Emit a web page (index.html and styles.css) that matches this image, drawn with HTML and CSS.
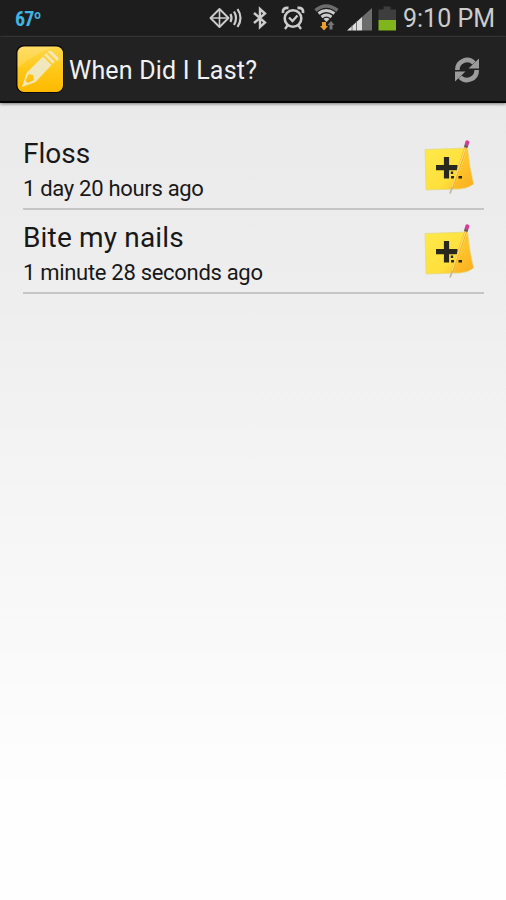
FILE: index.html
```html
<!DOCTYPE html>
<html lang="en">
<head>
<meta charset="utf-8">
<title>When Did I Last?</title>
<link rel="stylesheet" href="styles.css">
</head>
<body>
<svg class="defs" width="0" height="0" aria-hidden="true">
  <defs>
    <linearGradient id="gold" x1="0" y1="0" x2="0" y2="1"><stop offset="0" stop-color="#ffd84a"/><stop offset=".5" stop-color="#ffc818"/><stop offset="1" stop-color="#fdb900"/></linearGradient>
    <linearGradient id="note" x1="0" y1="0" x2="1" y2="1"><stop offset="0" stop-color="#fde94a"/><stop offset=".6" stop-color="#ffe03c"/><stop offset="1" stop-color="#fbb31c"/></linearGradient>
    <linearGradient id="signal" x1="0" y1="0" x2="1" y2="0"><stop offset="0" stop-color="#ddd"/><stop offset=".58" stop-color="#ddd"/><stop offset=".6" stop-color="#6c6c6c"/><stop offset="1" stop-color="#6c6c6c"/></linearGradient>
    <symbol id="add-note" viewBox="0 0 60 60">
      <path d="M5 9.500L47.500 8Q49.500 27 53.500 44Q48 48.500 40 49L6 50Z" fill="url(#note)" stroke="#e3d98a" stroke-width=".8"/>
      <path d="M47.500 9Q49 28 53.500 44Q47 48.500 34 48.500Z" fill="#fba81e" opacity=".5"/>
      <path d="M26.500 17V38.500M16 27.700H37.500" stroke="#28281e" stroke-width="5.200"/>
      <path d="M31 37.300h3M38.500 37.300h3.500M32 31.500v2.500" stroke="#28281e" stroke-width="2.400"/>
      <path d="M46 7L32 48" stroke="#f5ac2d" stroke-width="2.600"/>
      <path d="M45.500 8L31.800 47" stroke="#ffe173" stroke-width="1.200"/>
      <path d="M32.300 47.500L30 53.500" stroke="#c5b9a1" stroke-width="1.800"/>
      <path d="M45.700 7.500L46.600 4.500" stroke="#6a5d66" stroke-width="3.800"/>
      <path d="M46.900 3.500L47.300 2.300" stroke="#d93a9a" stroke-width="4" stroke-linecap="round"/>
    </symbol>
  </defs>
</svg>
<header class="status">
  <span class="temp">67º</span>
  <svg class="status-icons" width="192" height="37" viewBox="208 0 192 37" fill="none" stroke="#ccc" stroke-width="1.900">
    <path d="M210.500 18L219.500 9L228.500 18L219.500 27Z" stroke-linejoin="round"/>
    <path d="M219.500 10V26M211 18H228" stroke-width="1.600"/>
    <path d="M230.500 14Q232.500 18 230.500 22M234 11.500Q238 18 234 25M237.500 9Q243.500 18 237.500 27" stroke-width="2.200"/>
    <path d="M254 13L265 22.500L260 27V9L265 13.500L254 23" stroke-width="2.400"/>
    <circle cx="293" cy="18.500" r="8.300" stroke-width="2.600"/>
    <path d="M289 17.500L292.500 21L297.500 15.500M287.500 25.500L285 29M298.500 25.500L301 29" stroke-width="2.300"/>
    <path d="M283 13Q282 7.500 288.500 8M303 13Q304 7.500 297.500 8" stroke-width="2.800"/>
    <path d="M315.500 10.500Q326 1.500 337.500 10.500" stroke="#6d6d6d" stroke-width="3.600"/>
    <path d="M318.500 13.500Q326 7.500 334.500 13.500M321.500 17Q326.500 13 331.500 17" stroke-width="2.900"/>
    <path d="M323.500 19Q326.500 16.500 329.500 19L326.500 22Z" fill="#ccc" stroke="none"/>
    <path d="M322 22h4v4h2l-4 4.500l-4-4.500h2Z" fill="#eda12b" stroke="none"/>
    <path d="M331 21l3.500 4h-2v4.500h-3v-4.500h-2Z" fill="#777" stroke="none"/>
    <path d="M347 30.500L372 8V30.500Z" fill="url(#signal)" stroke="none"/>
    <path d="M352 25V31M356.500 21V31" stroke="#555" stroke-width=".8"/>
    <path d="M378.500 9.500h5v-3h7v3h5.500v10.500h-17.500Z" fill="#3e3e3e" stroke="none"/>
    <path d="M378.500 20H396V30.500H378.500Z" fill="#80b51c" stroke="none"/>
  </svg>
  <span class="clock">9:10 PM</span>
</header>
<div class="bar">
  <svg class="logo" width="48" height="48" viewBox="0 0 48 48">
    <rect x="0" y="0" width="48" height="48" rx="8" fill="#0c0c12"/>
    <rect x="1.500" y="1.500" width="45.500" height="45.500" rx="6.500" fill="url(#gold)"/>
    <path d="M1.500 23V8Q1.500 1.500 8 1.500H40Q22 6 1.500 23Z" fill="#fff" opacity=".16"/>
    <g fill="#f1e7bd">
      <path fill-rule="evenodd" d="M6 42L10.500 28L27 11.500L35.500 20L19.500 37ZM9.500 36L12 38L18 35L17 30L12.500 29Z"/>
      <path d="M28.300 10.200L30.200 8.300L38.700 16.800L36.800 18.700ZM31.800 6.800Q34 4.500 36.500 7L42 12.500Q43.500 14.500 41 16Z"/>
    </g>
  </svg>
  <h1 class="title">When Did I Last?</h1>
  <svg class="refresh" width="30" height="30" viewBox="0 0 30 30" fill="none" stroke="#9c9c9c" stroke-width="4.600">
    <path d="M5.300 15A9.700 9.700 0 0 1 22 8"/>
    <path d="M24.700 15A9.700 9.700 0 0 1 8 22"/>
    <path d="M27 3.500V13.500H16.500ZM3 26.500V16.500H13.500Z" fill="#9c9c9c" stroke="none"/>
  </svg>
</div>
<main class="list">
  <section class="row">
    <div class="copy"><h2 class="name">Floss</h2><p class="when">1 day 20 hours ago</p></div>
    <svg class="note" width="60" height="60"><use href="#add-note"/></svg>
  </section>
  <section class="row">
    <div class="copy"><h2 class="name nails">Bite my nails</h2><p class="when">1 minute 28 seconds ago</p></div>
    <svg class="note" width="60" height="60"><use href="#add-note"/></svg>
  </section>
</main>
</body>
</html>
```
FILE: styles.css
```css
* { box-sizing: border-box; }
body {
  margin: 0;
  height: 900px;
  display: flex;
  flex-direction: column;
  overflow: hidden;
  font-family: Roboto, sans-serif;
  color: #181818;
  background: linear-gradient(#eaeaea 100px, #eeeeee 300px, #f5f5f5 500px, #fefefe 800px);
}
h1, h2, p { margin: 0; font-weight: 400; white-space: nowrap; }
svg { display: block; flex: none; }
.defs { position: absolute; }
.status {
  display: flex;
  align-items: center;
  height: 37px;
  flex: none;
  padding-left: 15px;
  background: #1d1d1d;
  border-bottom: 1px solid #262626;
}
.temp { width: 193px; padding-top: 2px; font: 700 20px/36px "Roboto Condensed", Roboto, sans-serif; color: #40b4e2; letter-spacing: -.8px; }
.clock { margin-left: 3px; padding-top: 2px; font-size: 25px; line-height: 36px; color: #ccc; white-space: nowrap; }
.bar {
  display: flex;
  align-items: center;
  height: 66px;
  flex: none;
  padding: 0 24px 0 16px;
  background: #222;
  border-bottom: 2px solid #050505;
  box-shadow: 0 1px 3px #777;
}
.title { flex: 1; margin-left: 5px; padding-top: 3px; font-size: 25px; line-height: 32px; letter-spacing: .2px; color: #f1f1f1; }
.refresh { margin-top: 2px; }
.list { padding: 23px 22px 0 23px; }
.row {
  display: flex;
  justify-content: space-between;
  height: 84px;
  padding-right: 4px;
  border-bottom: 2px solid #c5c5c5;
}
.copy { padding-top: 10px; }
.name { font-size: 28px; line-height: 36px; }
.nails { letter-spacing: .17px; }
.when { font-size: 22px; line-height: 33px; letter-spacing: -.3px; }
.note { margin-top: 14px; }
```
